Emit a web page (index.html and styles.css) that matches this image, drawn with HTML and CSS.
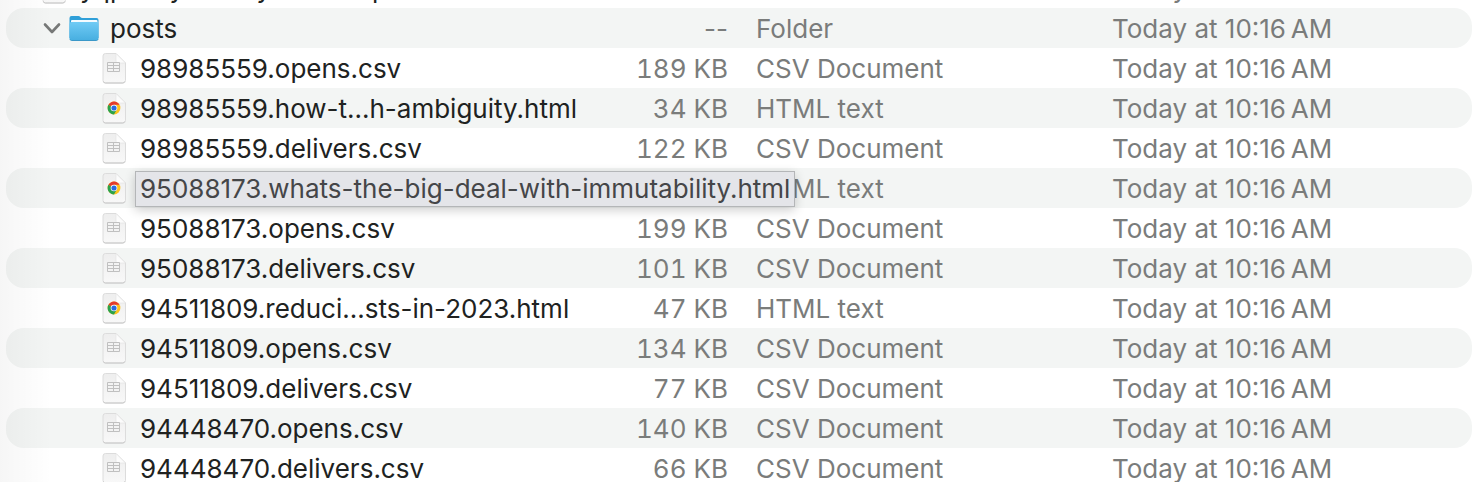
FILE: index.html
```html
<!DOCTYPE html>
<html lang="en">
<head>
  <meta charset="UTF-8">
  <meta name="viewport" content="width=device-width, initial-scale=1.0">
  <title>posts</title>
  <link rel="stylesheet" href="styles.css">
</head>
<body>

<!-- Shared icons -->
<svg class="icon-defs" width="0" height="0" aria-hidden="true">
  <defs>
    <linearGradient id="paper" x1="0" y1="0" x2="0" y2="1">
      <stop offset="0" stop-color="#eeeeee"/>
      <stop offset="1" stop-color="#f8f8f8"/>
    </linearGradient>
    <linearGradient id="fold" x1="0" y1="1" x2="1" y2="0">
      <stop offset="0" stop-color="#ffffff"/>
      <stop offset="0.5" stop-color="#fafafa"/>
      <stop offset="1" stop-color="#d8d8d8"/>
    </linearGradient>
    <linearGradient id="folderFront" x1="0" y1="0" x2="0" y2="1">
      <stop offset="0" stop-color="#70cbf5"/>
      <stop offset="1" stop-color="#47aee0"/>
    </linearGradient>
    <symbol id="page" viewBox="0 0 26 32">
      <path d="M4.500 1.500h10.500l9.500 9.500v17.500a2.500 2.500 0 0 1-2.500 2.500h-17.500a2.500 2.500 0 0 1-2.500-2.500v-24.500a2.500 2.500 0 0 1 2.500-2.500z" fill="url(#paper)" stroke="#dcdcdc"/>
      <path d="M2.500 29.500a2 2 0 0 0 2 1.500h17a2 2 0 0 0 2-1.500" fill="none" stroke="#c8c8c8"/>
      <path d="M15 1.500v7.500a2 2 0 0 0 2 2h7.500z" fill="url(#fold)" stroke="#e0e0e0" stroke-width=".6"/>
    </symbol>
    <symbol id="csv" viewBox="0 0 26 32">
      <use href="#page"/>
      <path d="M6.500 10.500h12v9h-12zM6.500 13.500h12M6.500 16.500h12M12.500 10.500v9" fill="#f3f3f3" stroke="#c0c0c0"/>
    </symbol>
    <symbol id="html" viewBox="0 0 26 32">
      <use href="#page"/>
      <circle cx="13" cy="16" r="6.400" fill="#fcc31e"/>
      <path d="M13 16L7.460 12.800a6.400 6.400 0 0 0 5.540 9.600l2.800-4.800z" fill="#2ba24c"/>
      <path d="M13 16L7.460 12.800a6.400 6.400 0 0 1 11.080 0h-5.540z" fill="#e33b2e"/>
      <circle cx="13" cy="16" r="3.300" fill="#fff"/>
      <circle cx="13" cy="16" r="2.600" fill="#2a6be0"/>
    </symbol>
  </defs>
</svg>

<div class="window">
  <table class="file-list">
    <colgroup>
      <col>
      <col class="col-size">
      <col class="col-kind">
      <col class="col-date">
    </colgroup>
    <tbody>
      <tr>
        <td class="name"><div class="entry parent"><svg class="icon"><use href="#page"/></svg><span>yqpuxeyuxexoyuxexoxep</span></div></td>
        <td class="size"></td>
        <td></td>
        <td>Today at 10:16&#8239;AM</td>
      </tr>
      <tr>
        <td class="name">
          <div class="entry folder">
            <button type="button" class="toggle" aria-label="Collapse posts">
              <svg width="18" height="12" viewBox="0 0 18 12"><path d="M2 2.500l7 7.500 7-7.500" fill="none" stroke="#767877" stroke-width="2.600" stroke-linecap="round" stroke-linejoin="round"/></svg>
            </button>
            <svg class="folder-icon" width="32" height="28" viewBox="0 0 32 28">
              <path d="M1.500 4a2 2 0 0 1 2-2h7c1.500 0 2 2 4 2h14a2 2 0 0 1 2 2v18h-29z" fill="#2f9fd8"/>
              <rect x="3" y="6" width="26.500" height="6" rx="1" fill="#f4fbff"/>
              <path d="M1.500 10a2 2 0 0 1 2-2h25a2 2 0 0 1 2 2v14.500a2 2 0 0 1-2 2h-25a2 2 0 0 1-2-2z" fill="url(#folderFront)"/>
              <path d="M2 25.500a2 2 0 0 0 1.500 1h25a2 2 0 0 0 1.500-1" fill="none" stroke="#3b98c8"/>
            </svg>
            <span>posts</span>
          </div>
        </td>
        <td class="size empty">--</td>
        <td>Folder</td>
        <td>Today at 10:16&#8239;AM</td>
      </tr>
      <tr>
        <td class="name"><div class="entry"><svg class="icon"><use href="#csv"/></svg><span>98985559.opens.csv</span></div></td>
        <td class="size">189 KB</td>
        <td>CSV Document</td>
        <td>Today at 10:16&#8239;AM</td>
      </tr>
      <tr>
        <td class="name"><div class="entry"><svg class="icon"><use href="#html"/></svg><span>98985559.how-t...h-ambiguity.html</span></div></td>
        <td class="size">34 KB</td>
        <td>HTML text</td>
        <td>Today at 10:16&#8239;AM</td>
      </tr>
      <tr>
        <td class="name"><div class="entry"><svg class="icon"><use href="#csv"/></svg><span>98985559.delivers.csv</span></div></td>
        <td class="size">122 KB</td>
        <td>CSV Document</td>
        <td>Today at 10:16&#8239;AM</td>
      </tr>
      <tr>
        <td class="name"><div class="entry"><svg class="icon"><use href="#html"/></svg><span class="tooltip" role="tooltip">95088173.whats-the-big-deal-with-immutability.html</span></div></td>
        <td class="size"></td>
        <td>HTML text</td>
        <td>Today at 10:16&#8239;AM</td>
      </tr>
      <tr>
        <td class="name"><div class="entry"><svg class="icon"><use href="#csv"/></svg><span>95088173.opens.csv</span></div></td>
        <td class="size">199 KB</td>
        <td>CSV Document</td>
        <td>Today at 10:16&#8239;AM</td>
      </tr>
      <tr>
        <td class="name"><div class="entry"><svg class="icon"><use href="#csv"/></svg><span>95088173.delivers.csv</span></div></td>
        <td class="size">101 KB</td>
        <td>CSV Document</td>
        <td>Today at 10:16&#8239;AM</td>
      </tr>
      <tr>
        <td class="name"><div class="entry"><svg class="icon"><use href="#html"/></svg><span>94511809.reduci...sts-in-2023.html</span></div></td>
        <td class="size">47 KB</td>
        <td>HTML text</td>
        <td>Today at 10:16&#8239;AM</td>
      </tr>
      <tr>
        <td class="name"><div class="entry"><svg class="icon"><use href="#csv"/></svg><span>94511809.opens.csv</span></div></td>
        <td class="size">134 KB</td>
        <td>CSV Document</td>
        <td>Today at 10:16&#8239;AM</td>
      </tr>
      <tr>
        <td class="name"><div class="entry"><svg class="icon"><use href="#csv"/></svg><span>94511809.delivers.csv</span></div></td>
        <td class="size">77 KB</td>
        <td>CSV Document</td>
        <td>Today at 10:16&#8239;AM</td>
      </tr>
      <tr>
        <td class="name"><div class="entry"><svg class="icon"><use href="#csv"/></svg><span>94448470.opens.csv</span></div></td>
        <td class="size">140 KB</td>
        <td>CSV Document</td>
        <td>Today at 10:16&#8239;AM</td>
      </tr>
      <tr>
        <td class="name"><div class="entry"><svg class="icon"><use href="#csv"/></svg><span>94448470.delivers.csv</span></div></td>
        <td class="size">66 KB</td>
        <td>CSV Document</td>
        <td>Today at 10:16&#8239;AM</td>
      </tr>
    </tbody>
  </table>
</div>

</body>
</html>
```

FILE: styles.css
```css
body {
  margin: 0;
  font-family: Inter, "Liberation Sans", sans-serif;
  font-size: 26px;
  line-height: 38px;
  color: #7a7c7b;
  background-color: #ffffff;
}

.icon-defs {
  position: absolute;
}

.window {
  height: 100vh;
  box-sizing: border-box;
  padding: 0 6px;
  overflow: hidden;
  position: relative;
}

/* Soft shade cast by the sidebar */
.window::before {
  content: "";
  position: absolute;
  left: 0;
  top: 0;
  bottom: 0;
  width: 52px;
  background: linear-gradient(to right, rgba(0, 0, 0, 0.035), rgba(0, 0, 0, 0));
  z-index: 1;
  pointer-events: none;
}

/* The list is scrolled most of a row down */
.file-list {
  width: 100%;
  margin-top: -32px;
  table-layout: fixed;
  border-collapse: separate;
  border-spacing: 0;
}

.col-size {
  width: 136px;
}

.col-kind {
  width: 356px;
}

.col-date {
  width: 366px;
}

.file-list td {
  box-sizing: border-box;
  height: 40px;
  padding: 2px 0 0 6px;
  white-space: nowrap;
}

.file-list tr:nth-child(even) td {
  background-color: #f3f5f4;
}

.file-list td:first-child {
  border-radius: 18px 0 0 18px;
}

.file-list td:last-child {
  border-radius: 0 18px 18px 0;
}

.file-list .name {
  padding: 0;
  color: #202221;
}

.file-list .size {
  padding-right: 22px;
  text-align: right;
  font-variant-numeric: tabular-nums;
}

.file-list .size.empty {
  font-variant-numeric: normal;
}

.entry {
  display: flex;
  align-items: center;
  height: 40px;
  padding-left: 95px;
  gap: 13px;
  position: relative;
}

.entry span {
  padding-top: 2px;
}

.entry.parent {
  padding-left: 35px;
}

.entry.folder {
  padding-left: 37px;
  gap: 10px;
}

.icon {
  width: 26px;
  height: 32px;
  flex: none;
}

.toggle {
  display: flex;
  padding: 0;
  border: none;
  background: none;
  cursor: pointer;
}

.folder-icon {
  margin-left: -3px;
}

.entry .tooltip {
  position: absolute;
  left: 129px;
  top: 3px;
  padding: 0 4px;
  line-height: 34px;
  color: #454648;
  background-color: #e4e5e9;
  border: 1px solid #b4b6b8;
  box-shadow: 0 3px 10px rgba(0, 0, 0, 0.2);
  z-index: 2;
}
```
